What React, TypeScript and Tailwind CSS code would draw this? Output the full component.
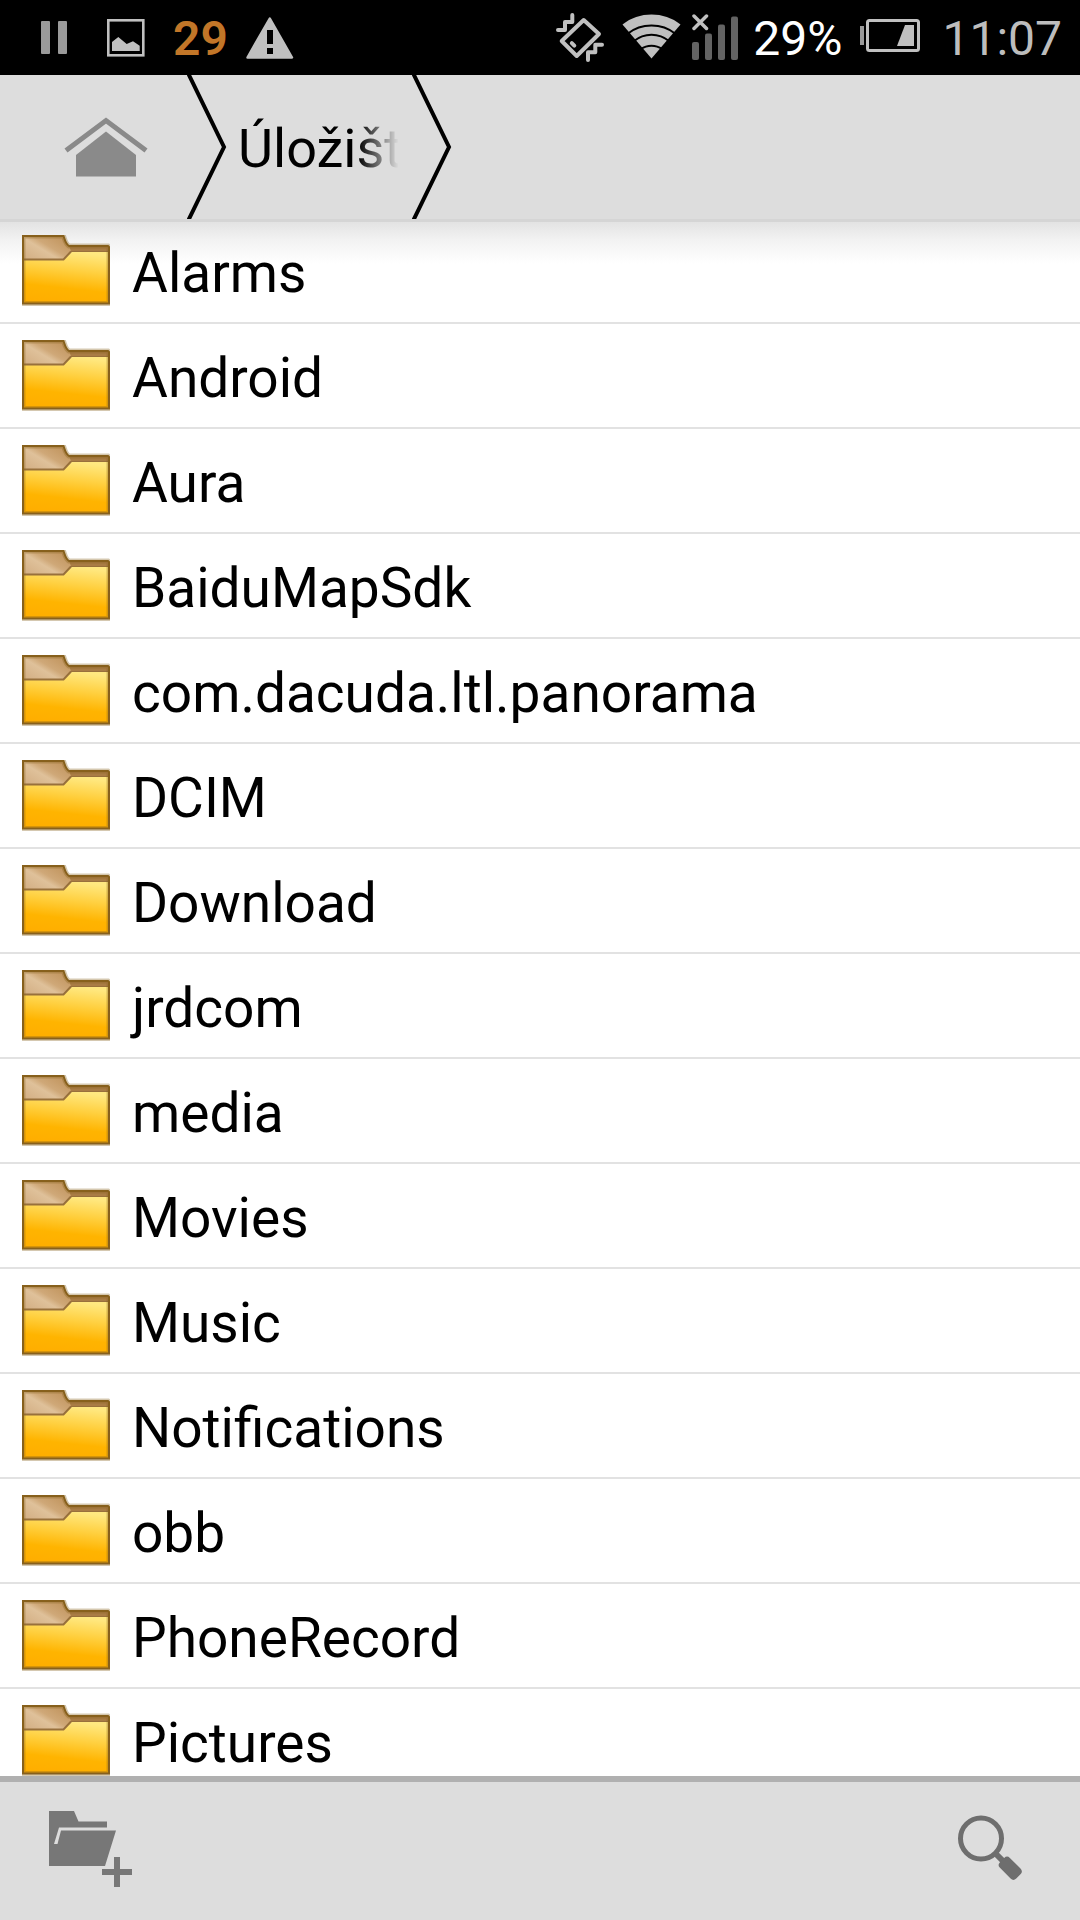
import React, { useState } from 'react';

const FOLDERS = [
  'Alarms',
  'Android',
  'Aura',
  'BaiduMapSdk',
  'com.dacuda.ltl.panorama',
  'DCIM',
  'Download',
  'jrdcom',
  'media',
  'Movies',
  'Music',
  'Notifications',
  'obb',
  'PhoneRecord',
  'Pictures',
];

function StatusBar() {
  return (
    <div className="flex h-[75px] shrink-0 items-center justify-between bg-black pl-10 pr-[18px] text-[48px] leading-[56px] text-[#bdbdbd]">
      <div className="flex items-center">
        <svg className="h-[34px] w-7" viewBox="0 0 28 34" fill="#9a9a9a">
          <rect x="1" y="0" width="9" height="33" rx="1" />
          <rect x="18" y="0" width="9" height="33" rx="1" />
        </svg>
        <svg className="ml-[39px] h-[38px] w-[38px]" viewBox="0 0 38 38">
          <rect x="1.3" y="1.3" width="35" height="35" fill="none" stroke="#c0c0c0" strokeWidth="2.6" />
          <path d="M5 32V23L11.3 18L19.7 25L26 22.3L32.7 26.7V32Z" fill="#c0c0c0" />
        </svg>
        <span className="ml-7 w-12 pt-0.5 text-[48px] font-semibold tabular-nums text-[#c27628]">29</span>
        <svg className="ml-[25px] h-[42px] w-12" viewBox="0 0 48 42">
          <path d="M23.8 1.5L46 40.5H1.5Z" fill="#c0c0c0" stroke="#c0c0c0" strokeWidth="2.5" strokeLinejoin="round" />
          <path d="M21 13h6v14h-6zM21 31h6v6h-6z" fill="#000" />
        </svg>
      </div>
      <div className="flex items-center">
        <svg className="h-[50px] w-12" viewBox="0 0 48 50" fill="none" stroke="#c0c0c0" strokeWidth="4" strokeLinecap="round" strokeLinejoin="round">
          <path d="M27.7 7L43 21L20.7 43L5.7 28Z" />
          <path d="M15.8 30.2L18.3 32.7" />
          <path d="M16.3 2V9H9V17H2" />
          <path d="M46 31.7H39.3V39.3H32V47" />
        </svg>
        <svg className="ml-[18px] h-[47px] w-[59px]" viewBox="0 0 59 47" fill="none" stroke="#000" strokeWidth="2">
          <path d="M29.5 44.5L0.5 10.5C17 -2.8 42 -2.8 58.5 10.5Z" fill="#c0c0c0" stroke="none" />
          <path d="M6 19.5C19 8.7 40 8.7 53 19.5" />
          <path d="M12 27C22 18.5 37 18.5 47 27" />
          <path d="M19 35C25 30.5 34 30.5 40 35" />
        </svg>
        <svg className="ml-[11px] h-[47px] w-[46px]" viewBox="0 0 46 47" fill="#636363">
          <rect x="0" y="28" width="7" height="18" rx="2" />
          <rect x="13" y="19.5" width="7" height="26.5" rx="2" />
          <rect x="26" y="10.5" width="7" height="35.5" rx="2" />
          <rect x="39" y="2.5" width="7" height="43.5" rx="2" />
          <path d="M2 2L14.5 14.5M14.5 2L2 14.5" stroke="#c0c0c0" strokeWidth="3.5" strokeLinecap="round" />
        </svg>
        <span className="ml-[15px] pt-0.5 text-white">29%</span>
        <svg className="ml-[18px] h-[37px] w-[60px]" viewBox="0 0 60 37">
          <rect x="0" y="7" width="4" height="19" fill="#9a9a9a" />
          <rect x="7.5" y="1.5" width="51" height="30" rx="2" fill="none" stroke="#c0c0c0" strokeWidth="3" />
          <path d="M45 6H54V27H37Z" fill="#c0c0c0" />
        </svg>
        <span className="ml-[22px] pt-0.5">11:07</span>
      </div>
    </div>
  );
}

function Chevron() {
  return (
    <svg className="h-36 w-10 shrink-0" viewBox="0 0 40 144" fill="none" stroke="#000" strokeWidth="4">
      <path d="M1 -2L37 72L1 146" />
    </svg>
  );
}

function FolderIcon() {
  return (
    <svg className="h-[71px] w-[88px] shrink-0" viewBox="0 0 88 71">
      <defs>
        <linearGradient id="front" x1="0.6" y1="0" x2="0.42" y2="1">
          <stop offset="0" stopColor="#ffe880" />
          <stop offset="0.35" stopColor="#ffd040" />
          <stop offset="0.7" stopColor="#ffb400" />
          <stop offset="1" stopColor="#ffae00" />
        </linearGradient>
        <linearGradient id="tab" x1="0" y1="1" x2="1" y2="0.2">
          <stop offset="0" stopColor="#d2ad82" />
          <stop offset="0.45" stopColor="#dfc19a" />
          <stop offset="0.6" stopColor="#cfa878" />
          <stop offset="1" stopColor="#c0935c" />
        </linearGradient>
      </defs>
      <path d="M1 1H41.5C43 5 43.5 9 47 11H86L87 12V68.5H1Z" fill="#a97c45" />
      <path d="M1 24.5H41.5L49 17H87V68.5H1Z" fill="url(#front)" />
      <path d="M1 1H41.5C43 5 43.5 9 47 11L49 16L41.5 24H1Z" fill="url(#tab)" />
      <path d="M1 24.5H41.5L49 16.5" fill="none" stroke="#98703c" strokeWidth="2" />
      <path d="M49 16.5H87" stroke="#98703c" strokeWidth="1" />
      <path d="M1 1H41.5C43 5 43.5 9 47 11H86L87 12V68.5H1Z" fill="none" stroke="#87601c" strokeOpacity="0.35" strokeWidth="5" />
      <path d="M1 1H41.5C43 5 43.5 9 47 11H86L87 12V68.5H1Z" fill="none" stroke="#87601c" strokeWidth="2" />
    </svg>
  );
}

export default function App(): React.JSX.Element {
  const [selected, setSelected] = useState<string>('');

  return (
    <div className="flex h-screen w-full flex-col bg-white font-[Roboto,sans-serif] text-black">
      <StatusBar />

      {/* Breadcrumbs */}
      <nav className="flex h-36 shrink-0 items-center bg-[#dddddd]">
        <button type="button" aria-label="Home" className="flex h-full w-[187px] items-center pl-16">
          <svg className="h-[60px] w-[84px]" viewBox="0 0 84 60">
            <path d="M2 33.5L42 3.5L82 33.5" fill="none" stroke="#8a8a8a" strokeWidth="5" />
            <path d="M42 14.5L72 38V59.5H12V38Z" fill="#8a8a8a" />
          </svg>
        </button>
        <Chevron />
        <button
          type="button"
          className="ml-[11px] w-[162px] whitespace-nowrap pt-1 text-left text-[54px] leading-[72px] [mask-image:linear-gradient(to_right,#000_74%,transparent_99%)]"
        >
          Úložišt
        </button>
        <div className="ml-3">
          <Chevron />
        </div>
      </nav>

      {/* Folder list, the header's shadow is painted behind the rows */}
      <main className="min-h-0 flex-1 overflow-y-auto bg-[linear-gradient(#d5d5d5_3px,#e3e3e3_3px,#f3f3f3_22px,#ffffff_45px)] [scrollbar-width:none]">
        <ul>
          {FOLDERS.map((name) => (
            <li key={name} className="border-b-2 border-[#e2e2e2]">
              <button
                type="button"
                aria-pressed={selected === name}
                onClick={() => setSelected(name)}
                className="flex h-[103px] w-full items-center gap-[22px] pl-[22px] text-left"
              >
                <FolderIcon />
                <span className="pt-1 text-[55px] leading-[72px]">{name}</span>
              </button>
            </li>
          ))}
        </ul>
      </main>

      <footer className="flex h-36 shrink-0 items-center justify-between border-t-[6px] border-[#b0b0b0] bg-[#dddddd] px-12">
        <button type="button" aria-label="New folder">
          <svg className="h-[84px] w-[84px]" viewBox="0 0 84 84" fill="#777777">
            <path d="M1 2H26L30.5 12.5H59V18.5H11L6 35H9.5L13 21.5H68L57 57H1Z" />
            <path d="M54 60h30v6h-30zM66 48h6v30h-6z" />
          </svg>
        </button>
        <button type="button" aria-label="Search">
          <svg className="h-[84px] w-[84px]" viewBox="0 0 84 84" fill="none" stroke="#6e6e6e">
            <circle cx="33" cy="29.5" r="20.5" strokeWidth="5" />
            <path d="M47 44L56 53" strokeWidth="6" />
            <rect x="-2" y="-7" width="23" height="14" rx="4" transform="translate(55.5 52.5) rotate(45)" fill="#6e6e6e" stroke="none" />
          </svg>
        </button>
      </footer>
    </div>
  );
}
